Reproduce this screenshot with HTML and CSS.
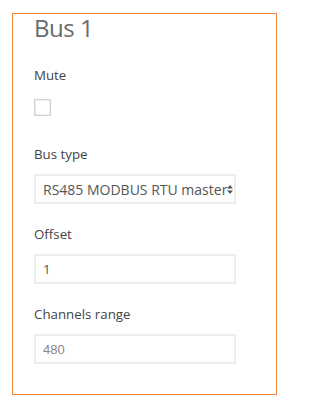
FILE: index.html
```html
<!DOCTYPE html>
<html lang="en">
<head>
<meta charset="utf-8">
<title>Bus 1</title>
<link rel="stylesheet" href="styles.css">
</head>
<body>
<div class="panel">
  <h1 class="title">Bus 1</h1>
  <div class="field">
    <label class="label" for="mute">Mute</label>
    <input class="check" type="checkbox" id="mute">
  </div>
  <div class="field field-select">
    <label class="label" for="bustype">Bus type</label>
    <div class="select-wrap">
      <select class="control select" id="bustype">
        <option>RS485 MODBUS RTU master</option>
      </select>
      <svg class="arrows" width="6" height="9" viewBox="0 0 6 9"><path d="M3 0 L6 3.6 L0 3.6 Z M3 9 L6 5.4 L0 5.4 Z" fill="#555"/></svg>
    </div>
  </div>
  <div class="field">
    <label class="label" for="offset">Offset</label>
    <input class="control" type="text" id="offset" value="1">
  </div>
  <div class="field">
    <label class="label" for="range">Channels range</label>
    <input class="control placeholder" type="text" id="range" placeholder="480">
  </div>
</div>
</body>
</html>
```
FILE: styles.css
```css
html, body {
  margin: 0;
  padding: 0;
  background: #ffffff;
}
body {
  font-family: "Open Sans", "Noto Sans", sans-serif;
  color: #444;
}
.panel {
  box-sizing: border-box;
  margin: 13px 0 0 12px;
  width: 265px;
  height: 382px;
  border: 1px solid #f0893f;
  padding: 1px 0 0 21px;
}
.title {
  margin: 0;
  font-size: 24px;
  line-height: 25px;
  font-weight: 400;
  letter-spacing: -0.5px;
  color: #6a6a6a;
}
.field {
  display: flex;
  flex-direction: column;
  align-items: flex-start;
}
.field:first-of-type {
  margin-top: 25px;
}
.field + .field {
  margin-top: 28px;
}
.field-select + .field,
.field-select + .field + .field {
  margin-top: 20px;
}
.label {
  font-size: 13.3px;
  line-height: 20px;
  color: #444;
  margin-bottom: 10px;
}
.check {
  appearance: none;
  -webkit-appearance: none;
  margin: 4px 0 0 0;
  width: 17px;
  height: 17px;
  box-sizing: border-box;
  border: 1px solid #d2d2d2;
  box-shadow: inset 0 0 0 1px #eeeeee;
  background: #fff;
}
.select-wrap {
  position: relative;
  width: 202px;
}
.control {
  appearance: none;
  -webkit-appearance: none;
  box-sizing: border-box;
  width: 202px;
  height: 30px;
  margin: 0;
  border: 2px solid #eeeeee;
  border-radius: 0;
  background: #fff;
  padding: 0 0 0 7px;
  font-family: "Open Sans", "Noto Sans", sans-serif;
  font-size: 13.3px;
  color: #555;
  outline: none;
}
.select {
  padding-right: 2px;
  font-size: 14px;
}
.arrows {
  position: absolute;
  right: 3px;
  top: 11px;
}
.placeholder::placeholder {
  font-family: "Liberation Sans", Arial, sans-serif;
  font-size: 13px;
  color: #888;
  opacity: 1;
}
```
